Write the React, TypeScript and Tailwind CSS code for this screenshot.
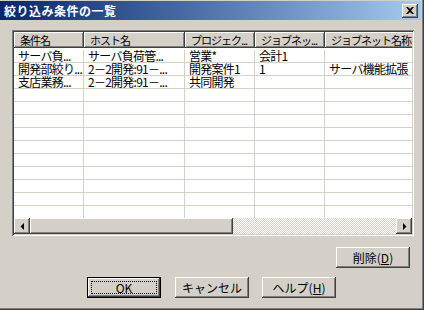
const font = "font-['Noto_Sans_CJK_JP','Noto_Sans',sans-serif]"

// classic raised 3d edge (button face)
const raised =
  'bg-[#d4d0c8] shadow-[inset_-1px_-1px_#404040,inset_1px_1px_#ffffff,inset_-2px_-2px_#808080,inset_2px_2px_#d4d0c8]'

const columns = [
  { label: '条件名', cls: 'w-[70px]' },
  { label: 'ホスト名', cls: 'w-[101px]' },
  { label: 'プロジェク...', cls: 'w-[70px]' },
  { label: 'ジョブネッ...', cls: 'w-[70px]' },
  { label: 'ジョブネット名称', cls: 'w-[100px]' },
]

const rows = [
  ['サーバ負...', 'サーバ負荷管...', '営業*', '会計1', ''],
  ['開発部絞り...', '2－2開発:91－...', '開発案件1', '1', 'サーバ機能拡張'],
  ['支店業務...', '2－2開発:91－...', '共同開発', '', ''],
]

const ROW_COUNT = 14

function Arrow({ dir }: { dir: 'left' | 'right' }) {
  return (
    <svg width="4" height="7" viewBox="0 0 4 7" className="block">
      {dir === 'left' ? (
        <polygon points="4,0 4,7 0.5,3.5" fill="#000" />
      ) : (
        <polygon points="0,0 0,7 3.5,3.5" fill="#000" />
      )}
    </svg>
  )
}

function Button({
  children,
  isDefault,
}: {
  children: React.ReactNode
  isDefault?: boolean
}) {
  if (isDefault) {
    return (
      <div className="h-[21px] w-[74px] border border-black">
        <div className={`${raised} flex h-full w-full items-center justify-center p-[3px]`}>
          <div className="flex h-full w-full items-center justify-center border border-dotted border-black text-[12px] leading-none">
            {children}
          </div>
        </div>
      </div>
    )
  }
  return (
    <div className={`${raised} flex h-[21px] w-[74px] items-center justify-center text-[12px] leading-none`}>
      {children}
    </div>
  )
}

export default function App() {
  return (
    <div
      className={`${font} flex h-[310px] w-[424px] flex-col bg-[#d4d0c8] text-black shadow-[inset_-1px_-1px_#404040,inset_-2px_-2px_#808080]`}
    >
      {/* title bar */}
      <div className="mr-[3px] mt-[1px] flex h-[19px] items-center bg-gradient-to-r from-[#0a246a] to-[#a6caf0] pl-[4px] pr-[3px]">
        <span className="text-[12px] font-bold leading-none tracking-[0.5px] text-white">絞り込み条件の一覧</span>
        <div className={`${raised} ml-auto flex h-[14px] w-[16px] items-center justify-center`}>
          <svg width="8" height="7" viewBox="0 0 8 7" className="block">
            <path d="M0 0h2l2 2 2-2h2L5 3.5 8 7H6L4 5 2 7H0l3-3.5z" fill="#000" />
          </svg>
        </div>
      </div>

      {/* list view */}
      <div className="ml-[12px] mt-[10px] h-[206px] w-[402px] shadow-[inset_1px_1px_#808080,inset_-1px_-1px_#ffffff,inset_2px_2px_#404040,inset_-2px_-2px_#d4d0c8] p-[2px]">
        <div className="flex h-full w-full flex-col overflow-hidden bg-white">
          {/* header */}
          <div className="flex h-[16px] shrink-0">
            {columns.map((c) => (
              <div
                key={c.label}
                className={`${c.cls} flex shrink-0 items-center overflow-x-clip whitespace-nowrap bg-[#d4d0c8] pl-[6px] text-[11px] leading-none tracking-[-1px] shadow-[inset_-1px_-1px_#404040,inset_1px_1px_#ffffff,inset_-2px_-2px_#808080]`}
              >
                {c.label}
              </div>
            ))}
          </div>

          {/* rows */}
          <div className="h-[170px] shrink-0 overflow-hidden pt-[2px]">
            {Array.from({ length: ROW_COUNT }).map((_, i) => {
              const r = rows[i] ?? ['', '', '', '', '']
              return (
                <div key={i} className="flex h-[13px] border-b border-[#d4d0c8]">
                  {columns.map((c, j) => (
                    <div
                      key={j}
                      className={`${c.cls} shrink-0 overflow-x-clip whitespace-nowrap border-r border-[#d4d0c8] pl-[4px] text-[12px] leading-[12px] tracking-[-0.75px]`}
                    >
                      {r[j]}
                    </div>
                  ))}
                </div>
              )
            })}
          </div>

          {/* horizontal scrollbar */}
          <div className="flex h-[16px] shrink-0">
            <div className={`${raised} flex h-[16px] w-[16px] shrink-0 items-center justify-center`}>
              <Arrow dir="left" />
            </div>
            <div className={`${raised} h-[16px] w-[203px] shrink-0`} />
            <div className="h-[16px] flex-1 bg-[repeating-conic-gradient(#ffffff_0_25%,#d4d0c8_0_50%)] bg-[length:2px_2px]" />
            <div className={`${raised} flex h-[16px] w-[16px] shrink-0 items-center justify-center pl-[1px]`}>
              <Arrow dir="right" />
            </div>
          </div>
        </div>
      </div>

      {/* delete */}
      <div className="mt-[11px] flex justify-end pr-[14px]">
        <Button>
          削除(<span className="underline">D</span>)
        </Button>
      </div>

      {/* bottom buttons */}
      <div className="mt-[9px] flex pl-[87px]">
        <Button isDefault>OK</Button>
        <div className="ml-[14px]">
          <Button>キャンセル</Button>
        </div>
        <div className="ml-[13px]">
          <Button>
            ヘルプ(<span className="underline">H</span>)
          </Button>
        </div>
      </div>
    </div>
  )
}
